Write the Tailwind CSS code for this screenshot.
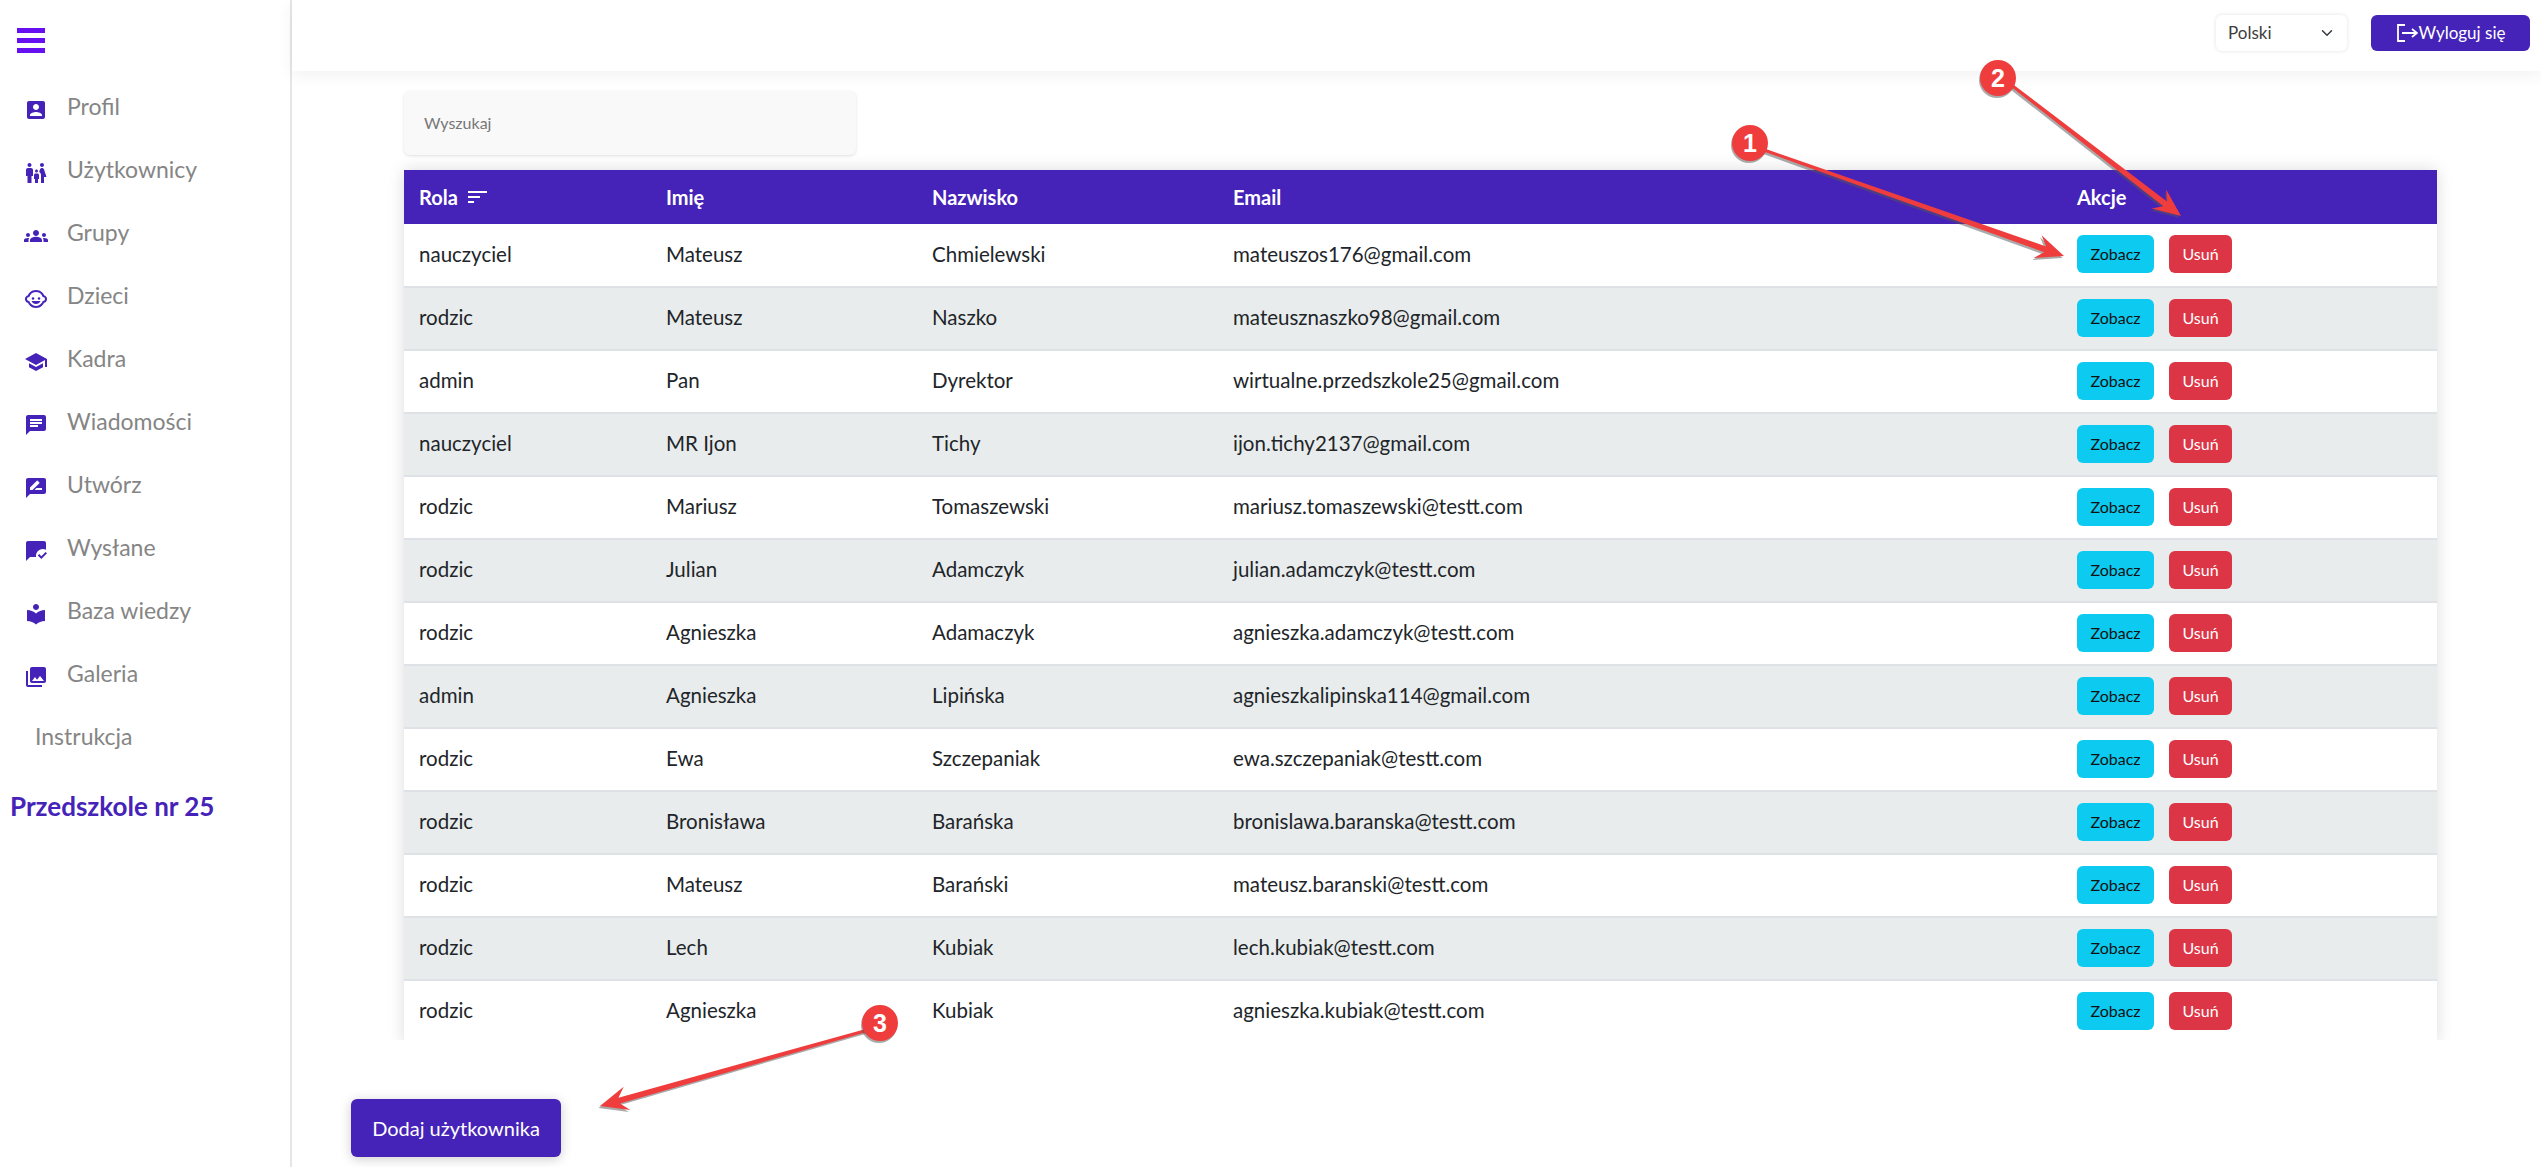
<!DOCTYPE html>
<html lang="pl">
<head>
    <meta charset="UTF-8">
    <title>Przedszkole nr 25 - Użytkownicy</title>
    <script src="https://cdn.jsdelivr.net/npm/@tailwindcss/browser@4"></script>
</head>
<body class="bg-white h-screen overflow-hidden font-['Lato','Noto_Sans',sans-serif] relative">
    <div class="flex h-full">
        <!-- sidebar -->
        <aside class="w-[292px] shrink-0 border-r-2 border-[#e6e6e6] h-full">
            <div class="pl-[17px] pt-[28px] h-[75px]">
                <div class="w-[28px] h-[25px] flex flex-col justify-between">
                    <div class="h-[5px] bg-[#6610f2]"></div>
                    <div class="h-[5px] bg-[#6610f2]"></div>
                    <div class="h-[5px] bg-[#6610f2]"></div>
                </div>
            </div>
            <nav class="text-[23px] text-[#858585]">
                <a class="flex items-center h-[63px] pl-[24px] gap-[19px]"><svg class="w-[24px] h-[24px] mt-[6px] fill-[#4523b8]" viewBox="0 0 24 24"><path d="M3 5v14c0 1.1.89 2 2 2h14c1.1 0 2-.9 2-2V5c0-1.1-.9-2-2-2H5c-1.11 0-2 .9-2 2zm12 4c0 1.66-1.34 3-3 3s-3-1.34-3-3 1.34-3 3-3 3 1.34 3 3zm-9 8c0-2 4-3.1 6-3.1s6 1.1 6 3.1v1H6v-1z"/></svg>Profil</a>
                <a class="flex items-center h-[63px] pl-[24px] gap-[19px]"><svg class="w-[24px] h-[24px] mt-[6px] fill-[#4523b8]" viewBox="0 0 24 24"><path d="M16 4c0-1.11.89-2 2-2s2 .89 2 2-.89 2-2 2-2-.89-2-2zm4 18v-6h2.5l-2.54-7.63C19.68 7.55 18.92 7 18.06 7h-.12c-.86 0-1.63.55-1.9 1.37l-.86 2.58c1.08.6 1.82 1.73 1.82 3.05v8h3zm-7.5-10.5c.83 0 1.5-.67 1.5-1.5s-.67-1.5-1.5-1.5S11 9.17 11 10s.67 1.5 1.5 1.5zM5.5 6c1.11 0 2-.89 2-2s-.89-2-2-2-2 .89-2 2 .89 2 2 2zm2 16v-7H9V9c0-1.1-.9-2-2-2H4c-1.1 0-2 .9-2 2v6h1.5v7h4zm6.5 0v-4h1v-4c0-.82-.68-1.5-1.5-1.5h-2c-.82 0-1.5.68-1.5 1.5v4h1v4h3z"/></svg>Użytkownicy</a>
                <a class="flex items-center h-[63px] pl-[24px] gap-[19px]"><svg class="w-[24px] h-[24px] mt-[6px] fill-[#4523b8]" viewBox="0 0 24 24"><path d="M12 12.75c1.63 0 3.07.39 4.24.9 1.08.48 1.76 1.56 1.76 2.73V18H6v-1.61c0-1.18.68-2.26 1.76-2.73 1.17-.52 2.61-.91 4.24-.91zM4 13c1.1 0 2-.9 2-2s-.9-2-2-2-2 .9-2 2 .9 2 2 2zm1.13 1.1c-.37-.06-.74-.1-1.13-.1-.99 0-1.93.21-2.78.58C.48 14.9 0 15.62 0 16.43V18h4.5v-1.61c0-.83.23-1.61.63-2.29zM20 13c1.1 0 2-.9 2-2s-.9-2-2-2-2 .9-2 2 .9 2 2 2zm4 3.43c0-.81-.48-1.53-1.22-1.85-.85-.37-1.79-.58-2.78-.58-.39 0-.76.04-1.13.1.4.68.63 1.46.63 2.29V18H24v-1.57zM12 6c1.66 0 3 1.34 3 3s-1.34 3-3 3-3-1.34-3-3 1.34-3 3-3z"/></svg>Grupy</a>
                <a class="flex items-center h-[63px] pl-[24px] gap-[19px]"><svg class="w-[24px] h-[24px] mt-[6px] fill-[#4523b8]" viewBox="0 0 24 24"><circle cx="9" cy="11.5" r="1.25"/><circle cx="15" cy="11.5" r="1.25"/><path d="M22.94 12.66c.04-.21.06-.43.06-.66s-.02-.45-.06-.66c-.25-1.51-1.36-2.74-2.81-3.17-.53-1.12-1.28-2.1-2.19-2.91C16.36 3.85 14.28 3 12 3s-4.36.85-5.94 2.26c-.92.81-1.67 1.8-2.19 2.91-1.45.43-2.56 1.65-2.81 3.17-.04.21-.06.43-.06.66s.02.45.06.66c.25 1.51 1.36 2.74 2.81 3.17.52 1.11 1.27 2.09 2.17 2.89C7.62 20.14 9.71 21 12 21s4.38-.86 5.97-2.28c.9-.8 1.65-1.79 2.17-2.89 1.44-.43 2.55-1.65 2.8-3.17zM19 14c-.1 0-.19-.02-.29-.03-.2.67-.49 1.29-.86 1.86C16.6 17.74 14.45 19 12 19s-4.6-1.26-5.85-3.17c-.37-.57-.66-1.19-.86-1.86-.1.01-.19.03-.29.03-1.1 0-2-.9-2-2s.9-2 2-2c.1 0 .19.02.29.03.2-.67.49-1.29.86-1.86C7.4 6.26 9.55 5 12 5s4.6 1.26 5.85 3.17c.37.57.66 1.19.86 1.86.1-.01.19-.03.29-.03 1.1 0 2 .9 2 2s-.9 2-2 2zM7.5 14c.76 1.77 2.49 3 4.5 3s3.74-1.23 4.5-3h-9z"/></svg>Dzieci</a>
                <a class="flex items-center h-[63px] pl-[24px] gap-[19px]"><svg class="w-[24px] h-[24px] mt-[6px] fill-[#4523b8]" viewBox="0 0 24 24"><path d="M5 13.18v4L12 21l7-3.82v-4L12 17l-7-3.82zM12 3L1 9l11 6 9-4.91V17h2V9L12 3z"/></svg>Kadra</a>
                <a class="flex items-center h-[63px] pl-[24px] gap-[19px]"><svg class="w-[24px] h-[24px] mt-[6px] fill-[#4523b8]" viewBox="0 0 24 24"><path d="M20 2H4c-1.1 0-1.99.9-1.99 2L2 22l4-4h14c1.1 0 2-.9 2-2V4c0-1.1-.9-2-2-2zM6 9h12v2H6V9zm8 5H6v-2h8v2zm4-6H6V6h12v2z"/></svg>Wiadomości</a>
                <a class="flex items-center h-[63px] pl-[24px] gap-[19px]"><svg class="w-[24px] h-[24px] mt-[6px] fill-[#4523b8]" viewBox="0 0 24 24"><path d="M20 2H4c-1.1 0-1.99.9-1.99 2L2 22l4-4h14c1.1 0 2-.9 2-2V4c0-1.1-.9-2-2-2zM6 14v-2.47l6.88-6.88c.2-.2.51-.2.71 0l1.77 1.77c.2.2.2.51 0 .71L8.47 14H6zm12 0h-7.5l2-2H18v2z"/></svg>Utwórz</a>
                <a class="flex items-center h-[63px] pl-[24px] gap-[19px]"><svg class="w-[24px] h-[24px] mt-[6px] fill-[#4523b8]" viewBox="0 0 24 24"><path d="M17.34 20l-3.54-3.54 1.41-1.41 2.12 2.12 4.24-4.24L23 14.34 17.34 20zM12 17c0-3.87 3.13-7 7-7 1.08 0 2.09.25 3 .68V4c0-1.1-.9-2-2-2H4c-1.1 0-2 .9-2 2v18l4-4h6v-1z"/></svg>Wysłane</a>
                <a class="flex items-center h-[63px] pl-[24px] gap-[19px]"><svg class="w-[24px] h-[24px] mt-[6px] fill-[#4523b8]" viewBox="0 0 24 24"><path d="M12 11.55C9.64 9.35 6.48 8 3 8v11c3.48 0 6.64 1.35 9 3.55 2.36-2.19 5.52-3.55 9-3.55V8c-3.48 0-6.64 1.35-9 3.55zM12 8c1.66 0 3-1.34 3-3s-1.34-3-3-3-3 1.34-3 3 1.34 3 3 3z"/></svg>Baza wiedzy</a>
                <a class="flex items-center h-[63px] pl-[24px] gap-[19px]"><svg class="w-[24px] h-[24px] mt-[6px] fill-[#4523b8]" viewBox="0 0 24 24"><path d="M22 16V4c0-1.1-.9-2-2-2H8c-1.1 0-2 .9-2 2v12c0 1.1.9 2 2 2h12c1.1 0 2-.9 2-2zm-11-4l2.03 2.71L16 11l4 5H8l3-4zM2 6v14c0 1.1.9 2 2 2h14v-2H4V6H2z"/></svg>Galeria</a>
                <a class="flex items-center h-[63px] pl-[35px]">Instrukcja</a>
            </nav>
            <div class="pl-[10px] mt-[19px] text-[26px] font-bold text-[#4523b8]">Przedszkole nr 25</div>
        </aside>

        <main class="flex-1 min-w-0 flex flex-col">
            <!-- top bar -->
            <header class="h-[71px] shrink-0 bg-white shadow-[0_4px_16px_rgba(0,0,0,0.06)] flex justify-end items-start pt-[15px] pr-[11px] gap-[24px]">
                <div class="w-[131px] h-[36px] rounded-md shadow-[0_0_4px_rgba(0,0,0,0.12)] flex items-center justify-between pl-[12px] pr-[14px] text-[17px] text-[#3d3d3d]">
                    Polski
                    <svg class="w-[12px] h-[12px]" viewBox="0 0 16 16" fill="none" stroke="#343a40" stroke-width="2" stroke-linecap="round" stroke-linejoin="round"><path d="M2 5l6 6 6-6"/></svg>
                </div>
                <button class="w-[159px] h-[36px] rounded-md bg-[#4523b8] text-white text-[17px] flex items-center justify-center gap-[1px]">
                    <svg class="w-[22px] h-[20px]" viewBox="0 0 22 20" fill="none" stroke="#fff" stroke-width="1.8"><path d="M9 2H2v16h7"/><path d="M6 10h15M16 6l5 4-5 4"/></svg>
                    Wyloguj się
                </button>
            </header>

            <div class="flex-1 pl-[59px]">
                <div class="ml-[53px] mt-[20px] w-[452px] h-[64px] bg-[#f9f9f9] rounded-md shadow-[0_1px_3px_rgba(0,0,0,0.12)] flex items-center pl-[20px] text-[16px] text-[#777]">Wyszukaj</div>

                <!-- outer box clips the table and its shadow at the bottom -->
                <div class="ml-[33px] -mt-[5px] w-[2073px] h-[890px] overflow-hidden pl-[20px] pr-[20px] pt-[20px]">
                    <div class="shadow-[0_0_16px_rgba(0,0,0,0.14)]">
                        <table class="w-full table-fixed text-left text-[20.5px] text-[#212529]">
                            <colgroup>
                                <col class="w-[247px]"><col class="w-[266px]"><col class="w-[301px]"><col class="w-[844px]"><col>
                            </colgroup>
                            <thead class="bg-[#4523b8] text-white text-[20px]">
                                <tr class="h-[54px]">
                                    <th class="pl-[15px] font-bold"><span class="inline-flex items-center gap-[10px]">Rola
                                        <svg class="w-[19px] h-[14px]" viewBox="0 0 19 14" fill="#fff"><rect y="1" width="19" height="2"/><rect y="6" width="12" height="2"/><rect y="11" width="6" height="2"/></svg></span></th>
                                    <th class="pl-[15px] font-bold">Imię</th>
                                    <th class="pl-[15px] font-bold">Nazwisko</th>
                                    <th class="pl-[15px] font-bold">Email</th>
                                    <th class="pl-[15px] font-bold">Akcje</th>
                                </tr>
                            </thead>
                            <tbody id="rows"></tbody>
                        </table>
                    </div>
                </div>

                <button class="mt-[59px] w-[210px] h-[58px] rounded-md bg-[#4523b8] text-white text-[20px] shadow-[0_2px_12px_rgba(0,0,0,0.2)]">Dodaj użytkownika</button>
            </div>
        </main>
    </div>

    <!-- annotations drawn over the screenshot -->
    <svg id="notes" class="absolute inset-0 w-full h-full pointer-events-none" viewBox="0 0 2541 1167"></svg>

    <script>
        const users = [
            ['nauczyciel', 'Mateusz', 'Chmielewski', 'mateuszos176@gmail.com'],
            ['rodzic', 'Mateusz', 'Naszko', 'mateusznaszko98@gmail.com'],
            ['admin', 'Pan', 'Dyrektor', 'wirtualne.przedszkole25@gmail.com'],
            ['nauczyciel', 'MR Ijon', 'Tichy', 'ijon.tichy2137@gmail.com'],
            ['rodzic', 'Mariusz', 'Tomaszewski', 'mariusz.tomaszewski@testt.com'],
            ['rodzic', 'Julian', 'Adamczyk', 'julian.adamczyk@testt.com'],
            ['rodzic', 'Agnieszka', 'Adamaczyk', 'agnieszka.adamczyk@testt.com'],
            ['admin', 'Agnieszka', 'Lipińska', 'agnieszkalipinska114@gmail.com'],
            ['rodzic', 'Ewa', 'Szczepaniak', 'ewa.szczepaniak@testt.com'],
            ['rodzic', 'Bronisława', 'Barańska', 'bronislawa.baranska@testt.com'],
            ['rodzic', 'Mateusz', 'Barański', 'mateusz.baranski@testt.com'],
            ['rodzic', 'Lech', 'Kubiak', 'lech.kubiak@testt.com'],
            ['rodzic', 'Agnieszka', 'Kubiak', 'agnieszka.kubiak@testt.com'],
        ];

        document.getElementById('rows').innerHTML = users.map((u, i) => `
            <tr class="h-[63px] border-b-2 border-[#dee2e6] ${i % 2 ? 'bg-[#e9ecec]' : 'bg-white'}">
                ${u.map(cell => `<td class="pl-[15px] pb-[2px]">${cell}</td>`).join('')}
                <td class="pl-[15px] pb-[2px]">
                    <div class="flex gap-[15px]">
                        <button class="w-[77px] h-[38px] rounded-md bg-[#0dcaf0] text-[#111] text-[16px]">Zobacz</button>
                        <button class="w-[63px] h-[38px] rounded-md bg-[#dc3545] text-white text-[16px]">Usuń</button>
                    </div>
                </td>
            </tr>`).join('');

        function arrow(x1, y1, x2, y2) {
            const len = Math.hypot(x2 - x1, y2 - y1);
            const ux = (x2 - x1) / len, uy = (y2 - y1) / len;
            const at = (d, w) => `${x1 + ux * d - uy * w},${y1 + uy * d + ux * w}`;
            const pts = [at(0, 1.5), at(len - 20, 3), at(len - 28, 12), at(len, 0), at(len - 28, -12), at(len - 20, -3), at(0, -1.5)].join(' ');
            return `<polygon points="${pts}" fill="#555" fill-opacity="0.5" transform="translate(-1.5 2)"/><polygon points="${pts}" fill="#ef3d3d"/>`;
        }

        function badge(x, y, n) {
            return `<circle cx="${x - 1}" cy="${y + 2}" r="18" fill="#555" fill-opacity="0.5"/><circle cx="${x}" cy="${y}" r="18" fill="#ef3d3d"/>
                <text x="${x}" y="${y + 9}" text-anchor="middle" font-family="Liberation Sans" font-weight="700" font-size="25" fill="#fff">${n}</text>`;
        }

        document.getElementById('notes').innerHTML =
            arrow(1764, 150, 2064, 256) + arrow(2010, 84, 2181, 216) + arrow(868, 1030, 600, 1106) +
            badge(1750, 143, 1) + badge(1998, 78, 2) + badge(880, 1023, 3);
    </script>
</body>
</html>
